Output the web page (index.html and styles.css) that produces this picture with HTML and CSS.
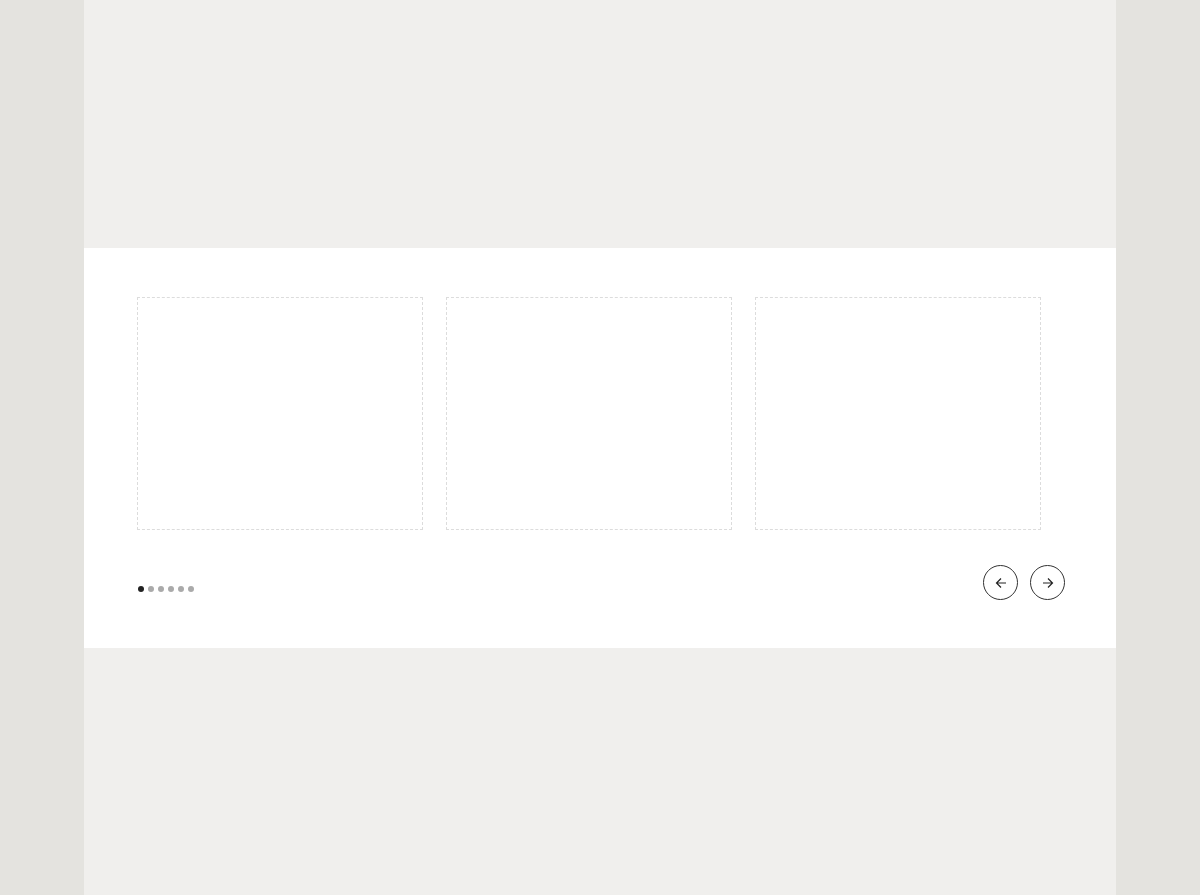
FILE: index.html
```html
<!DOCTYPE html>
<html lang="en">

<head>
  <meta charset="UTF-8" />
  <meta name="viewport" content="width=device-width, initial-scale=1.0" />
  <title>Carousel</title>
  <link rel="stylesheet" href="styles.css">
</head>

<body>
  <div class="page">
    <section class="carousel">
      <div class="track">
        <div class="slide"></div>
        <div class="slide"></div>
        <div class="slide"></div>
      </div>
      <div class="controls">
        <div class="dots">
          <span class="dot active"></span>
          <span class="dot"></span>
          <span class="dot"></span>
          <span class="dot"></span>
          <span class="dot"></span>
          <span class="dot"></span>
        </div>
        <div class="arrows">
          <button class="arrow" aria-label="Previous">
            <svg width="14" height="14" viewBox="0 0 14 14" fill="none" stroke="#222" stroke-width="1.2">
              <path d="M12 7H2.5M7 2.5L2.5 7L7 11.5" />
            </svg>
          </button>
          <button class="arrow" aria-label="Next">
            <svg width="14" height="14" viewBox="0 0 14 14" fill="none" stroke="#222" stroke-width="1.2">
              <path d="M2 7h9.5M7 2.5L11.5 7L7 11.5" />
            </svg>
          </button>
        </div>
      </div>
    </section>
  </div>
</body>

</html>
```

FILE: styles.css
```css
body {
  margin: 0;
  background-color: #e4e3df;
  font-family: "Inter", sans-serif;
}

.page {
  width: 1032px;
  min-height: 895px;
  margin: 0 auto;
  padding-top: 248px;
  box-sizing: border-box;
  background-color: #f0efed;
}

.carousel {
  height: 400px;
  box-sizing: border-box;
  padding: 49px 51px 48px 53px;
  background-color: #fff;
}

.track {
  display: flex;
  gap: 23px;
}

.slide {
  width: 286px;
  height: 233px;
  box-sizing: border-box;
  border: 1px dashed #dcdcdc;
}

.controls {
  display: flex;
  justify-content: space-between;
  align-items: flex-end;
  margin-top: 35px;
}

.dots {
  display: flex;
  gap: 4px;
  margin-bottom: 8px;
  margin-left: 1px;
}

.dot {
  width: 6px;
  height: 6px;
  border-radius: 50%;
  background-color: #aaa;
}

.dot.active {
  background-color: #222;
}

.arrows {
  display: flex;
  gap: 12px;
}

.arrow {
  width: 35px;
  height: 35px;
  padding: 0;
  border: 1px solid #333;
  border-radius: 50%;
  background: #fff;
  display: flex;
  align-items: center;
  justify-content: center;
  cursor: pointer;
}
```
